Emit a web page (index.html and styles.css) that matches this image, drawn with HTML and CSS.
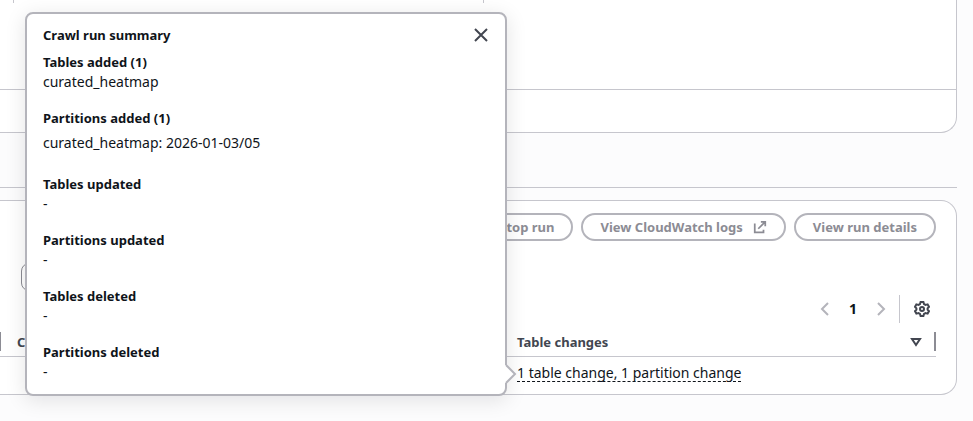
FILE: index.html
```html
<!DOCTYPE html>
<html lang="en">
<head>
    <meta charset="UTF-8">
    <meta name="viewport" content="width=device-width, initial-scale=1.0">
    <title>Crawler runs</title>
    <link rel="stylesheet" href="styles.css">
</head>
<body>
    <main class="page">
        <section class="panel panel-top">
            <div class="properties">
                <div class="property"></div>
                <div class="property"></div>
                <div class="property"></div>
            </div>
            <div class="panel-footer"></div>
        </section>

        <div class="tabs"></div>

        <section class="panel panel-runs">
            <div class="actions">
                <button type="button" class="btn" disabled>Stop run</button>
                <button type="button" class="btn" disabled>View CloudWatch logs
                    <svg class="icon-external" viewBox="0 0 16 16" aria-hidden="true"><path d="M9 2h5v5M6 10l8-8M2 4v10h10v-3"/></svg>
                </button>
                <button type="button" class="btn" disabled>View run details</button>
            </div>
            <div class="filter">
                <input type="text" class="filter-input" aria-label="Filter crawler runs">
            </div>
            <div class="pagination">
                <button type="button" class="icon-btn page-arrow" aria-label="Previous page" disabled>
                    <svg class="icon" viewBox="0 0 16 16"><path d="M11 2 5 8l6 6"/></svg>
                </button>
                <button type="button" class="icon-btn page-number">1</button>
                <button type="button" class="icon-btn page-arrow" aria-label="Next page" disabled>
                    <svg class="icon" viewBox="0 0 16 16"><path d="m5 2 6 6-6 6"/></svg>
                </button>
                <button type="button" class="icon-btn settings" aria-label="Preferences">
                    <svg class="icon" viewBox="0 0 16 16"><path d="M6.600 1h2.800l.6 2 1.500.9 2.100-.5 1.400 2.400L13.600 7.300v1.400l1.400 1.500-1.400 2.400-2.100-.5-1.500.9-.6 2H6.600l-.6-2-1.500-.9-2.100.5L1 10.200l1.400-1.500V7.300L1 5.800l1.400-2.400 2.100.5L6 3z"/><circle cx="8" cy="8" r="2"/></svg>
                </button>
            </div>
            <table class="runs">
                <thead>
                    <tr>
                        <th class="col-first"><div class="th-inner">C</div></th>
                        <th class="col-changes">
                            <div class="th-inner">Table changes
                                <svg class="icon-sort" viewBox="0 0 12 12" aria-hidden="true"><path d="M2 3h8l-4 6z"/></svg>
                            </div>
                        </th>
                    </tr>
                </thead>
                <tbody>
                    <tr>
                        <td></td>
                        <td>
                            <div class="changes">
                                <button type="button" class="changes-link">1 table change, 1 partition change</button>
                                <div class="popover" role="dialog" aria-labelledby="popover-title">
                                    <div class="popover-header">
                                        <h2 id="popover-title">Crawl run summary</h2>
                                        <button type="button" class="icon-btn close" aria-label="Close">
                                            <svg class="icon" viewBox="0 0 16 16"><path d="m2 2 12 12M14 2 2 14"/></svg>
                                        </button>
                                    </div>
                                    <dl class="summary">
                                        <dt>Tables added (1)</dt>
                                        <dd>curated_heatmap</dd>
                                        <dt>Partitions added (1)</dt>
                                        <dd class="list">curated_heatmap: 2026-01-03/05</dd>
                                        <dt>Tables updated</dt>
                                        <dd>-</dd>
                                        <dt>Partitions updated</dt>
                                        <dd>-</dd>
                                        <dt>Tables deleted</dt>
                                        <dd>-</dd>
                                        <dt>Partitions deleted</dt>
                                        <dd>-</dd>
                                    </dl>
                                    <svg class="popover-arrow" viewBox="0 0 12 20" aria-hidden="true"><path d="M0 1h2l8 9-8 9H0z" fill="#fff"/><path d="m1 1 9 9-9 9" fill="none" stroke="#b4b4bb" stroke-width="2"/></svg>
                                </div>
                            </div>
                        </td>
                    </tr>
                </tbody>
            </table>
        </section>
    </main>
</body>
</html>
```
FILE: styles.css
```css
* {
    box-sizing: border-box;
}
body {
    margin: 0;
    background-color: #fcfcfd;
    color: #0f141a;
    font-family: "Noto Sans", "Open Sans", sans-serif;
    font-size: 14px;
    line-height: 20px;
}
button {
    font: inherit;
    color: inherit;
}
.page {
    padding: 0 16px 26px 0;
}
.panel {
    background-color: #fff;
    border: 1px solid #c6c6cd;
    border-left: 0;
}
.panel-top {
    border-top: 0;
    border-radius: 0 0 16px 0;
}
.properties {
    display: grid;
    grid-template-columns: 14px 470px 1fr;
    padding-bottom: 86px;
    border-bottom: 1px solid #c6c6cd;
}
.property {
    height: 3px;
    border-right: 1px solid #c6c6cd;
}
.property:last-child {
    border-right: 0;
}
.panel-footer {
    height: 42px;
}
.tabs {
    height: 55px;
    margin-bottom: 12px;
    border-bottom: 1px solid #c6c6cd;
}
.panel-runs {
    padding: 12px 20px 11px 0;
    border-radius: 0 16px 16px 0;
}
.actions {
    display: flex;
    justify-content: flex-end;
    gap: 8px;
}
.btn {
    display: flex;
    align-items: center;
    gap: 10px;
    height: 28px;
    padding: 0 17px;
    background-color: #fff;
    border: 2px solid #b4b4bb;
    border-radius: 20px;
    color: #8c8c94;
    font-size: 13px;
    font-weight: 700;
    white-space: nowrap;
}
.icon,
.icon-external {
    display: block;
    width: 16px;
    height: 16px;
    fill: none;
    stroke: currentColor;
    stroke-width: 2;
}
.icon-external {
    width: 14px;
    height: 14px;
}
.filter {
    padding: 22px 0 4px 21px;
}
.filter-input {
    display: block;
    width: 400px;
    height: 28px;
    border: 1px solid #8c8c94;
    border-radius: 8px;
}
.pagination {
    display: flex;
    justify-content: flex-end;
    align-items: center;
}
.icon-btn {
    display: flex;
    align-items: center;
    justify-content: center;
    width: 28px;
    height: 28px;
    padding: 0;
    background: none;
    border: 0;
    color: #424650;
}
.page-arrow {
    color: #b4b4bb;
}
.page-number {
    color: #0f141a;
    font-weight: 700;
}
.settings {
    width: 37px;
    padding-left: 8px;
    margin-left: 4px;
    border-left: 1px solid #c6c6cd;
}
.runs {
    width: 100%;
    table-layout: fixed;
    border-collapse: collapse;
}
.runs th {
    padding: 9px 0 5px;
    border-bottom: 1px solid #c6c6cd;
    color: #424650;
    font-size: 13px;
    text-align: left;
}
.th-inner {
    display: flex;
    align-items: center;
    justify-content: space-between;
    height: 19px;
    padding: 0 12px 0 20px;
    border-right: 2px solid #8c8c94;
}
.col-first .th-inner {
    padding-left: 16px;
    border-left: 1px solid #8c8c94;
}
.col-changes {
    width: 439px;
}
.icon-sort {
    width: 12px;
    height: 12px;
    fill: none;
    stroke: #424650;
    stroke-width: 2;
}
.runs td {
    padding: 6px 0 0 20px;
}
.changes {
    display: inline-block;
    position: relative;
}
.changes-link {
    display: block;
    padding: 0;
    background: none;
    border: 0;
    border-bottom: 1px dashed #0f141a;
    line-height: 17px;
}

/* opens to the left of the link, level with the table row */
.popover {
    position: absolute;
    right: calc(100% + 10px);
    bottom: -14px;
    width: 482px;
    padding: 11px 16px 12px;
    background-color: #fff;
    border: 2px solid #b4b4bb;
    border-radius: 8px;
    box-shadow: 0 4px 20px 1px rgba(0, 7, 22, 0.1);
}
.popover-header {
    display: flex;
    align-items: center;
    justify-content: space-between;
    height: 20px;
    margin-bottom: 7px;
}
.popover-header h2 {
    margin: 0;
    font-size: 13px;
}
.close {
    margin-right: -6px;
}
.summary {
    margin: 0;
}
.summary dt {
    font-size: 13px;
    font-weight: 700;
}
.summary dd {
    margin: 0 0 16px;
}
.summary .list {
    margin: 5px 0 21px;
}
.summary dd:last-child {
    margin-bottom: 0;
}
.popover-arrow {
    position: absolute;
    right: -12px;
    bottom: 10px;
    width: 12px;
    height: 20px;
}
```
